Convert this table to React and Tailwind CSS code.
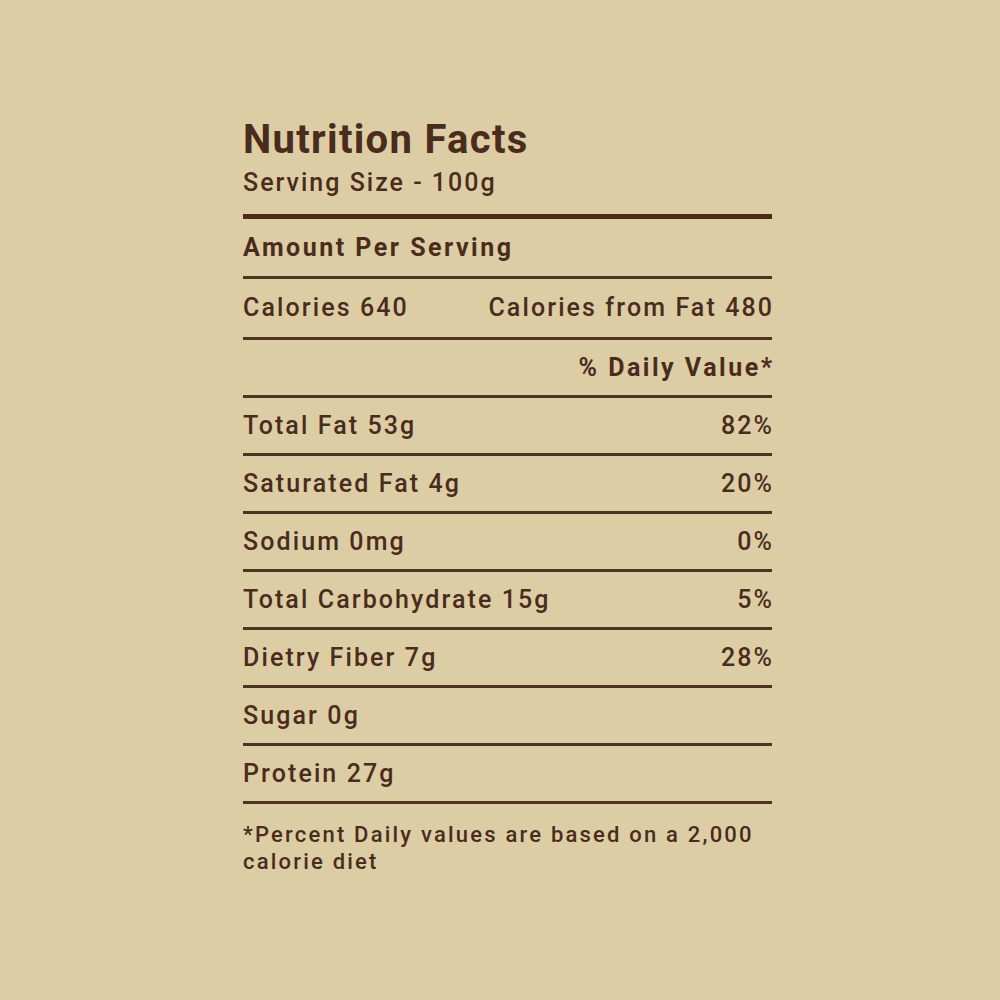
import React from 'react';

const rows = [
  { label: 'Total Fat 53g', value: '82%' },
  { label: 'Saturated Fat 4g', value: '20%' },
  { label: 'Sodium 0mg', value: '0%' },
  { label: 'Total Carbohydrate 15g', value: '5%' },
  { label: 'Dietry Fiber 7g', value: '28%' },
  { label: 'Sugar 0g', value: '' },
  { label: 'Protein 27g', value: '' },
];

const Row = ({ children, className = '' }) => (
  <div className={`flex items-center justify-between border-b-[3px] border-[#4f3322] ${className}`}>
    {children}
  </div>
);

export default function App() {
  return (
    <div
      className="w-[1000px] h-[1000px] bg-[#ddcda5] text-[#4a2c1d]"
      style={{ fontFamily: 'Roboto, "Liberation Sans", sans-serif' }}
    >
      <div className="ml-[243px] w-[529px] pt-[118px]">
        <h1 className="text-[40px] leading-[44px] font-bold tracking-[1.3px]">Nutrition Facts</h1>
        <div className="mt-[7px] text-[25px] leading-[28px] font-medium tracking-[2px]">Serving Size - 100g</div>
        <div className="mt-[17px] h-[5px] bg-[#4a2c1d]" />

        <Row className="h-[60px] text-[25px] font-bold tracking-[2.5px]">
          <span>Amount Per Serving</span>
        </Row>
        <Row className="h-[61px] text-[25px] font-medium tracking-[2.1px]">
          <span>Calories 640</span>
          <span className="-mr-[2.1px]">Calories from Fat 480</span>
        </Row>
        <Row className="h-[58px] text-[25px] font-bold tracking-[2.5px]">
          <span className="ml-auto -mr-[2.5px]">% Daily Value*</span>
        </Row>
        {rows.map((r) => (
          <Row key={r.label} className="h-[58px] text-[25px] font-medium tracking-[2.1px]">
            <span>{r.label}</span>
            <span className="-mr-[2.1px]">{r.value}</span>
          </Row>
        ))}

        <p className="pt-[17px] text-[22px] leading-[27px] font-medium tracking-[2.2px]">
          *Percent Daily values are based on a 2,000 calorie diet
        </p>
      </div>
    </div>
  );
}
